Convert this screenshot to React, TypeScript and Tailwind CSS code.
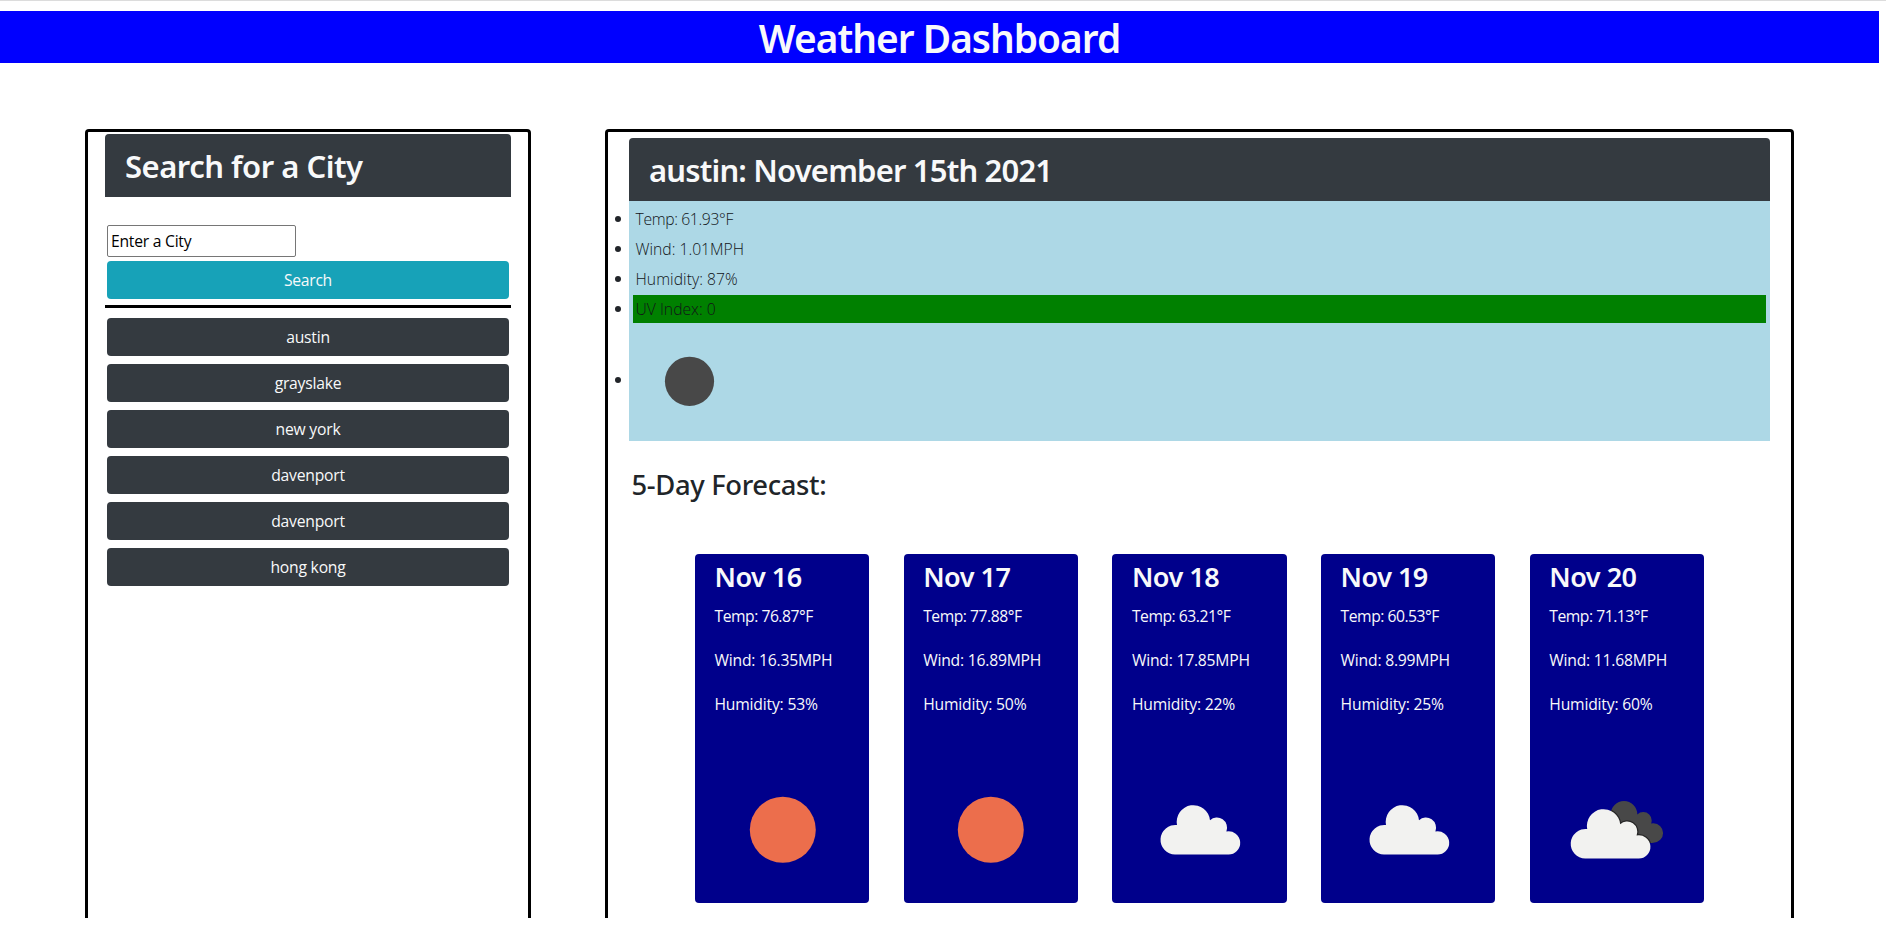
type Icon = 'sun' | 'cloud' | 'clouds';

interface Day {
  date: string;
  temp: string;
  wind: string;
  humidity: string;
  icon: Icon;
}

const cities = ['austin', 'grayslake', 'new york', 'davenport', 'davenport', 'hong kong'];

const days: Day[] = [
  { date: 'Nov 16', temp: '76.87', wind: '16.35', humidity: '53', icon: 'sun' },
  { date: 'Nov 17', temp: '77.88', wind: '16.89', humidity: '50', icon: 'sun' },
  { date: 'Nov 18', temp: '63.21', wind: '17.85', humidity: '22', icon: 'cloud' },
  { date: 'Nov 19', temp: '60.53', wind: '8.99', humidity: '25', icon: 'cloud' },
  { date: 'Nov 20', temp: '71.13', wind: '11.68', humidity: '60', icon: 'clouds' },
];

const CLOUD =
  'M15 49.6A14.8 14.8 0 1 1 17 20.1A16.7 16.7 0 1 1 50 15.2A10.2 10.2 0 0 1 66.4 26.4A11.7 11.7 0 1 1 68 49.6Z';

function WeatherIcon({ icon }: { icon: Icon }) {
  return (
    <svg width="134" height="134" viewBox="0 0 134 134" className="block shrink-0">
      {icon === 'sun' && <circle cx="67.8" cy="66.8" r="33" fill="#ec6e4c" />}
      {icon === 'cloud' && <path transform="translate(28 42)" d={CLOUD} fill="#f2f2f0" />}
      {icon === 'clouds' && (
        <>
          <clipPath id="rear">
            <circle cx="75" cy="51.3" r="13.3" />
            <circle cx="94.2" cy="57.5" r="8.5" />
            <circle cx="104.4" cy="70" r="9.7" />
            <path d="M62 50L94 53L103 79.6L80 80Z" />
          </clipPath>
          <g clipPath="url(#rear)">
            <rect width="134" height="134" fill="#484848" />
            <path transform="translate(21.2 46)" d={CLOUD} fill="none" stroke="#262626" strokeWidth="2.4" />
          </g>
          <path transform="translate(21.2 46)" d={CLOUD} fill="#f2f2f0" />
        </>
      )}
    </svg>
  );
}

function Reading({ text, className }: { text: string; className: string }) {
  return (
    <li className="-ml-[18px] mt-[2px] flex h-7 items-center">
      <span className="mr-3 size-[6px] shrink-0 rounded-full bg-[#212529]" />
      <span className={'h-7 flex-1 pt-[2px] pl-[2.5px] text-[15.7px] leading-6 text-[#111418] ' + className}>{text}</span>
    </li>
  );
}

function DayCard({ day }: { day: Day }) {
  return (
    <article className="h-[349px] flex-1 rounded bg-[#00008b] pt-[6px] pl-[19.5px] text-[15.7px] text-[#f8f9fa]">
      <h4 className="h-[44px] font-['Noto_Sans',sans-serif] text-[27px] leading-[34px] font-semibold tracking-[-0.5px]">
        {day.date}
      </h4>
      <p className="mb-5 leading-6 tracking-[-0.48px]">Temp: {day.temp}°F</p>
      <p className="mb-5 leading-6 tracking-[-0.22px]">Wind: {day.wind}MPH</p>
      <p className="mb-[46.5px] leading-6 tracking-[-0.2px]">Humidity: {day.humidity}%</p>
      <WeatherIcon icon={day.icon} />
    </article>
  );
}

export default function App() {
  return (
    <div className="h-[926px] overflow-hidden border-t border-[#dcdcdc] bg-white font-['Open_Sans','Noto_Sans',sans-serif] text-base text-[#212529]">
      <h1 className="mt-[10px] mr-[7px] h-[52px] bg-[#0000ff] pt-[3px] text-center font-['Noto_Sans',sans-serif] text-[38.8px] leading-[49px] font-semibold tracking-[-0.97px] text-[#f8f9fa]">
        Weather Dashboard
      </h1>

      <main className="mt-[66px] flex h-[789px] pl-[85px]">
        <aside className="mr-[74px] w-[446px] rounded-t border-3 border-b-0 border-black px-[17px] pt-[2px]">
          <h2 className="h-[63px] rounded-t bg-[#343a40] px-5 pt-[13px] font-['Noto_Sans',sans-serif] text-[31px] leading-[39px] font-semibold tracking-[-0.5px] text-[#f8f9fa]">
            Search for a City
          </h2>
          <form className="mt-7 border-b-3 border-black px-[2px] pb-[6px]">
            <input
              type="text"
              placeholder="Enter a City"
              className="block h-8 w-[189px] rounded-[2px] border border-[#767676] px-[3px] text-[15.7px] tracking-[-0.25px] placeholder:text-black"
            />
            <button
              type="button"
              className="mt-1 block h-[38px] w-full rounded bg-[#17a2b8] pt-[1px] text-[15.7px] tracking-[-0.3px] text-[#f8f9fa]"
            >
              Search
            </button>
          </form>
          <div className="mt-[10px] flex flex-col gap-2 px-[2px]">
            {cities.map((city, i) => (
              <button
                key={i}
                type="button"
                className="h-[38px] rounded bg-[#343a40] pt-[1px] text-[15.7px] tracking-[-0.22px] text-[#f8f9fa]"
              >
                {city}
              </button>
            ))}
          </div>
        </aside>

        <section className="w-[1189px] rounded-t border-3 border-b-0 border-black px-[21px] pt-[6px]">
          <h2 className="h-[63px] rounded-t bg-[#343a40] px-5 pt-[13px] font-['Noto_Sans',sans-serif] text-[31px] leading-[39px] font-semibold tracking-[-0.83px] text-[#f8f9fa]">
            austin: November 15th 2021
          </h2>
          <ul className="h-[240px] bg-[#add8e6] pt-[2px] pr-1 pl-1 font-light">
            <Reading text="Temp: 61.93°F" className="tracking-[-0.35px]" />
            <Reading text="Wind: 1.01MPH" className="tracking-[0px]" />
            <Reading text="Humidity: 87%" className="tracking-[0.05px]" />
            <Reading text="UV Index: 0" className="bg-[#008000] tracking-[0px]" />
            <li className="-ml-[18px] mt-[2px] flex h-[110px] items-center">
              <span className="mr-3 size-[6px] shrink-0 rounded-full bg-[#212529]" />
              <svg width="114" height="110" viewBox="0 0 114 110" className="block">
                <circle cx="56.5" cy="56.3" r="24.6" fill="#484848" />
              </svg>
            </li>
          </ul>
          <h3 className="mt-[27px] h-[34px] pl-[2.5px] font-['Noto_Sans',sans-serif] text-[27.4px] leading-[34px] font-medium tracking-[-0.35px]">
            5-Day Forecast:
          </h3>
          <div className="mt-[52px] flex gap-[34.5px] pr-[66px] pl-[66px]">
            {days.map((day) => (
              <DayCard key={day.date} day={day} />
            ))}
          </div>
        </section>
      </main>
    </div>
  );
}
